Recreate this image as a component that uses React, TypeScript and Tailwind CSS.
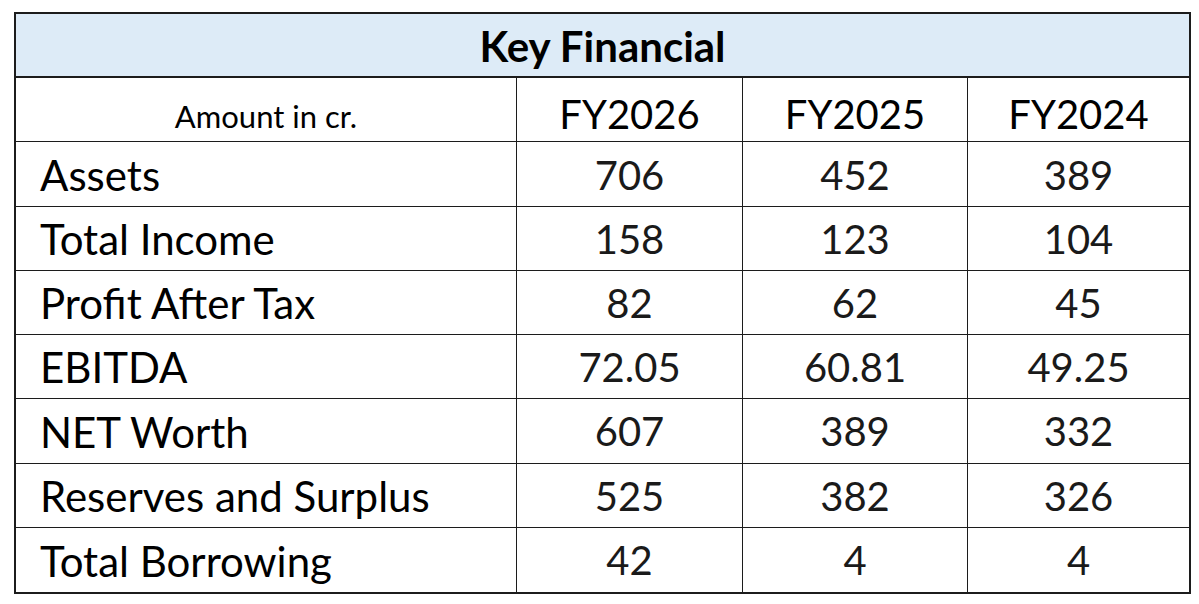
import React from "react"

interface Row {
  label: string
  values: string[]
}

const years = ["FY2026", "FY2025", "FY2024"]

const rows: Row[] = [
  { label: "Assets", values: ["706", "452", "389"] },
  { label: "Total Income", values: ["158", "123", "104"] },
  { label: "Profit After Tax", values: ["82", "62", "45"] },
  { label: "EBITDA", values: ["72.05", "60.81", "49.25"] },
  { label: "NET Worth", values: ["607", "389", "332"] },
  { label: "Reserves and Surplus", values: ["525", "382", "326"] },
  { label: "Total Borrowing", values: ["42", "4", "4"] },
]

export default function App() {
  return (
    <div className="min-h-screen bg-white pl-[14px] pt-[12px]" style={{ fontFamily: "Lato, 'Open Sans', sans-serif" }}>
      <div className="w-[1177px] h-[582px] border-2 border-[#1c1c1c] grid grid-cols-[501px_226px_225px_1fr] grid-rows-[repeat(9,minmax(0,1fr))] text-black">
        {/* Title */}
        <div className="col-span-4 bg-[#ddebf7] border-b-2 border-[#1c1c1c] flex items-center justify-center">
          <span className="text-[42px] font-bold leading-none pt-[2px]">Key Financial</span>
        </div>

        {/* Header */}
        <div className="border-r-[1.5px] border-b-[1.5px] border-[#1c1c1c] flex items-end justify-center pb-[9px]">
          <span className="text-[31px] leading-none">Amount in cr.</span>
        </div>
        {years.map((y, i) => (
          <div
            key={y}
            className={`${i < 2 ? "border-r-[1.5px]" : ""} border-b-[1.5px] border-[#1c1c1c] flex items-center justify-center pt-[8px]`}
          >
            <span className="text-[40px] leading-none">{y}</span>
          </div>
        ))}

        {/* Data rows */}
        {rows.map((row, r) => {
          const last = r === rows.length - 1
          return (
            <React.Fragment key={row.label}>
              <div
                className={`border-r-[1.5px] ${last ? "" : "border-b-[1.5px]"} border-[#1c1c1c] flex items-end pl-[24px] pb-[10px]`}
              >
                <span className="text-[42px] leading-none">{row.label}</span>
              </div>
              {row.values.map((v, i) => (
                <div
                  key={i}
                  className={`${i < 2 ? "border-r-[1.5px]" : ""} ${last ? "" : "border-b-[1.5px]"} border-[#1c1c1c] flex items-center justify-center pt-[1px]`}
                >
                  <span className="text-[40px] leading-none text-[#1a1a1a]">{v}</span>
                </div>
              ))}
            </React.Fragment>
          )
        })}
      </div>
    </div>
  )
}
